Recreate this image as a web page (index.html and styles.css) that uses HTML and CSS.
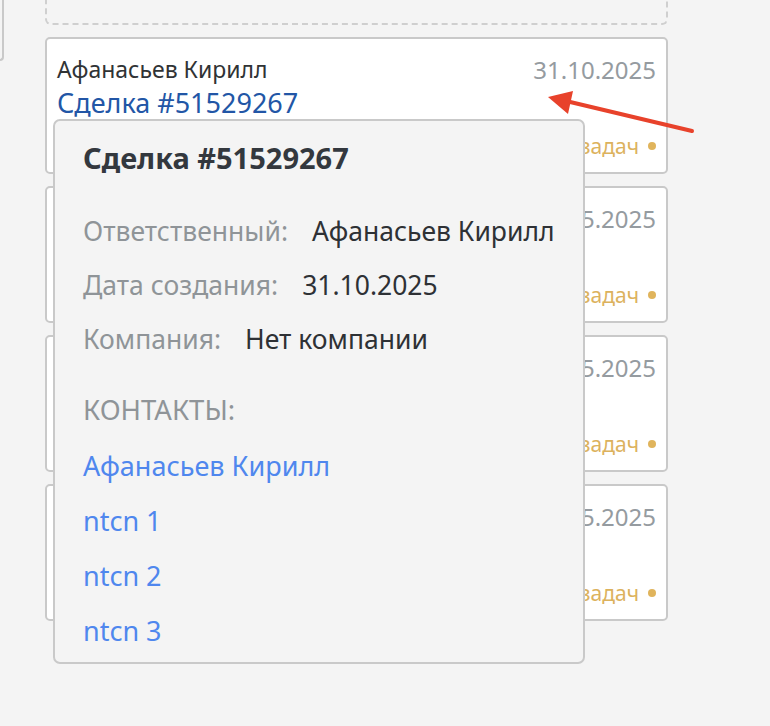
FILE: index.html
```html
<!DOCTYPE html>
<html lang="ru">

<head>
    <meta charset="UTF-8">
    <meta name="viewport" content="width=device-width, initial-scale=1.0">
    <title>Сделки</title>
    <link rel="stylesheet" href="styles.css">
</head>

<body>
    <div class="board">
        <div class="stub"></div>

        <div class="column">
            <div class="dropzone"></div>

            <div class="lead-card">
                <div class="lead-top">
                    <span class="lead-user">Афанасьев Кирилл</span>
                    <span class="lead-date">31.10.2025</span>
                </div>
                <a class="lead-name" href="#">Сделка #51529267</a>
                <div class="lead-tasks">Нет задач <span class="dot"></span></div>
            </div>

            <!-- the rest of these cards sit under the popup -->
            <div class="lead-card">
                <div class="lead-top">
                    <span class="lead-date">05.2025</span>
                </div>
                <div class="lead-tasks">задач <span class="dot"></span></div>
            </div>

            <div class="lead-card">
                <div class="lead-top">
                    <span class="lead-date">05.2025</span>
                </div>
                <div class="lead-tasks">задач <span class="dot"></span></div>
            </div>

            <div class="lead-card">
                <div class="lead-top">
                    <span class="lead-date">05.2025</span>
                </div>
                <div class="lead-tasks">задач <span class="dot"></span></div>
            </div>
        </div>
    </div>

    <!-- popup shown on hover over the first card -->
    <div class="lead-tooltip">
        <div class="tip-title">Сделка #51529267</div>
        <div class="tip-row"><span class="tip-label">Ответственный:</span><span class="tip-value">Афанасьев Кирилл</span></div>
        <div class="tip-row"><span class="tip-label">Дата создания:</span><span class="tip-value">31.10.2025</span></div>
        <div class="tip-row"><span class="tip-label">Компания:</span><span class="tip-value">Нет компании</span></div>
        <div class="tip-head">КОНТАКТЫ:</div>
        <a class="tip-link" href="#">Афанасьев Кирилл</a>
        <a class="tip-link" href="#">ntcn 1</a>
        <a class="tip-link" href="#">ntcn 2</a>
        <a class="tip-link" href="#">ntcn 3</a>
    </div>

    <svg class="pointer-arrow" width="770" height="726" viewBox="0 0 770 726">
        <line x1="692" y1="131" x2="566" y2="101" stroke="#e8422b" stroke-width="4" stroke-linecap="round" />
        <polygon points="548,97 573,91 568,114" fill="#e8422b" />
    </svg>
</body>

</html>
```

FILE: styles.css
```css
body {
    margin: 0;
    font-family: "Noto Sans", Roboto, sans-serif;
    background-color: #f4f4f4;
    overflow: hidden;
}

a {
    text-decoration: none;
}

.board {
    display: flex;
    align-items: flex-start;
}

.stub {
    width: 4px;
    height: 61px;
    box-sizing: border-box;
    border-right: 2px solid #c9c9c9;
    border-bottom: 2px solid #c9c9c9;
    border-bottom-right-radius: 5px;
}

.column {
    width: 623px;
    margin-left: 41px;
    margin-top: -16px;
}

.dropzone {
    height: 41px;
    box-sizing: border-box;
    border: 2px dashed #cfcfcf;
    border-top: none;
    border-radius: 0 0 6px 6px;
}

.lead-card {
    height: 137px;
    box-sizing: border-box;
    margin-top: 12px;
    padding: 16px 10px 14px 10px;
    background-color: #fff;
    border: 2px solid #c9c9c9;
    border-radius: 5px;
    display: flex;
    flex-direction: column;
}

.lead-top {
    display: flex;
    justify-content: space-between;
    align-items: center;
    height: 28px;
}

.lead-user {
    font-size: 23px;
    color: #303335;
}

.lead-date {
    margin-left: auto;
    font-size: 24px;
    color: #959ba0;
}

.lead-name {
    font-size: 27px;
    line-height: 40px;
    color: #2256a6;
}

.lead-tasks {
    margin-top: auto;
    align-self: flex-end;
    display: flex;
    align-items: center;
    gap: 9px;
    font-size: 21px;
    line-height: 24px;
    color: #dcb25d;
}

.dot {
    width: 8px;
    height: 8px;
    border-radius: 50%;
    background-color: #e0b45c;
}

.lead-tooltip {
    position: absolute;
    left: 53px;
    top: 119px;
    width: 532px;
    height: 545px;
    box-sizing: border-box;
    padding: 17px 28px;
    background-color: #f4f4f4;
    border: 2px solid #c9c9c9;
    border-radius: 7px;
}

.tip-title {
    font-size: 29px;
    font-weight: 700;
    line-height: 40px;
    color: #33383e;
    margin-bottom: 26px;
}

.tip-row {
    font-size: 26.5px;
    line-height: 54px;
    white-space: nowrap;
}

.tip-label {
    color: #8f9498;
    margin-right: 24px;
}

.tip-value {
    color: #2e3135;
}

.tip-head {
    margin-top: 16px;
    font-size: 27.5px;
    line-height: 56px;
    color: #8f9498;
}

.tip-link {
    display: block;
    font-size: 27px;
    line-height: 55px;
    color: #4f87ee;
}

.pointer-arrow {
    position: absolute;
    left: 0;
    top: 0;
    pointer-events: none;
}
```
